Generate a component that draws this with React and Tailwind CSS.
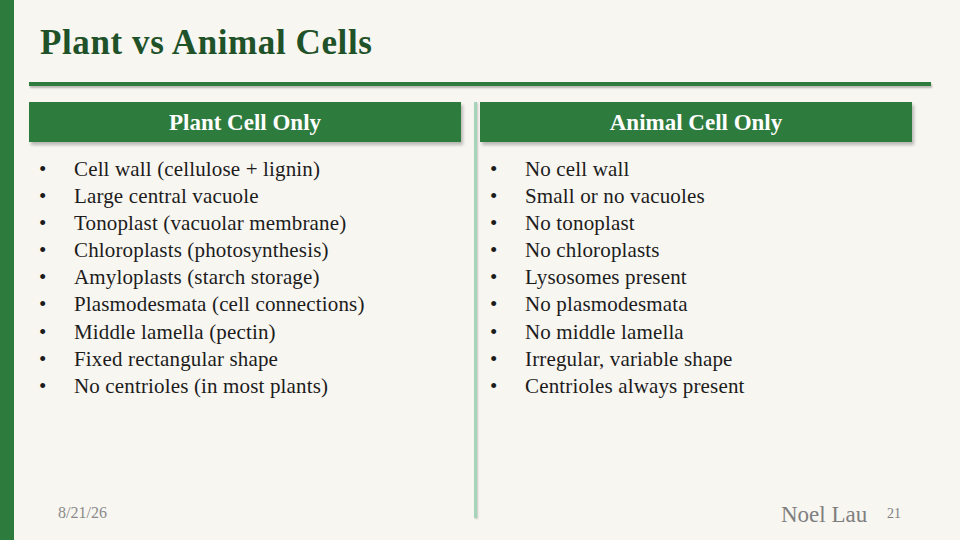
import React from 'react'

const plant = [
    'Cell wall (cellulose + lignin)',
    'Large central vacuole',
    'Tonoplast (vacuolar membrane)',
    'Chloroplasts (photosynthesis)',
    'Amyloplasts (starch storage)',
    'Plasmodesmata (cell connections)',
    'Middle lamella (pectin)',
    'Fixed rectangular shape',
    'No centrioles (in most plants)',
]

const animal = [
    'No cell wall',
    'Small or no vacuoles',
    'No tonoplast',
    'No chloroplasts',
    'Lysosomes present',
    'No plasmodesmata',
    'No middle lamella',
    'Irregular, variable shape',
    'Centrioles always present',
]

const Column = ({ title, items }) => (
    <div className="w-[432px] flex flex-col">
        <div className="h-[40px] bg-[#2e7b3e] flex items-center justify-center text-white font-bold text-[23px] pt-[2px] shadow-[2px_3px_3px_rgba(0,0,0,0.25)]">
            {title}
        </div>
        <ul className="mt-[14px] text-[21px] leading-[27.1px] tracking-[0.15px] text-[#1c1c1c]">
            {items.map((t) => (
                <li key={t} className="flex">
                    <span className="w-[45px] pl-[10px]">•</span>
                    <span>{t}</span>
                </li>
            ))}
        </ul>
    </div>
)

const App = () => {
    return (
        <div
            className="relative w-[960px] h-[540px] bg-[#f8f6f1] flex overflow-hidden"
            style={{ fontFamily: '"Liberation Serif", serif' }}
        >
            <div className="w-[14px] h-full bg-[#2e7b3e]" />
            <div className="flex-1 flex flex-col pl-[15px]">
                <h1 className="mt-[17px] ml-[11px] h-[43px] text-[35px] font-bold text-[#1f5229] tracking-[0.6px]">
                    Plant vs Animal Cells
                </h1>
                <div className="mt-[22px] w-[902px] h-[4px] bg-[#2e7b3e] shadow-[1px_2px_2px_rgba(0,0,0,0.25)]" />
                <div className="mt-[16px] flex">
                    <Column title="Plant Cell Only" items={plant} />
                    <div className="ml-[13px] mr-[3px] w-[3px] h-[416px] bg-[#a6d4b8] shadow-[1px_1px_2px_rgba(0,0,0,0.2)]" />
                    <Column title="Animal Cell Only" items={animal} />
                </div>
            </div>
            <span className="absolute left-[58px] top-[501px] text-[16px] text-[#8a8a8a]">8/21/26</span>
            <span className="absolute left-[781px] top-[498px] text-[23px] text-[#7f7f7f]">Noel Lau</span>
            <span className="absolute left-[887px] top-[503px] text-[14px] text-[#7f7f7f]">21</span>
        </div>
    )
}

export default App
